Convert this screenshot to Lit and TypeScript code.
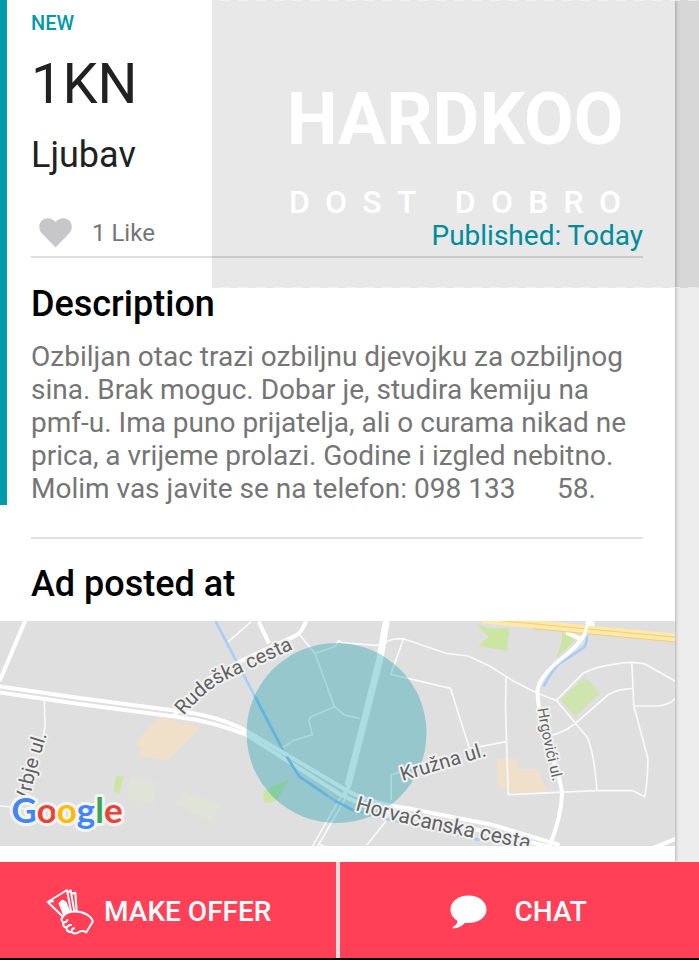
import { LitElement, html, css } from "lit";
import { customElement } from "lit/decorators.js";

@customElement("brand-mark")
class BrandMark extends LitElement {
  static styles = css`
    :host {
      display: flex;
      flex-direction: column;
      align-items: center;
      box-sizing: border-box;
      padding-top: 64px;
      padding-right: 1px;
      background:
        repeating-linear-gradient(90deg, transparent 0 8px, rgba(255, 255, 255, 0.5) 8px 18px) top / 100% 1px no-repeat,
        repeating-linear-gradient(90deg, transparent 0 8px, rgba(255, 255, 255, 0.5) 8px 18px) bottom / 100% 1px no-repeat,
        rgba(0, 0, 0, 0.09);
      color: #fff;
      pointer-events: none;
    }
    .lettering {
      text-align: center;
      font: 700 72px/112px Roboto, sans-serif;
      white-space: nowrap;
    }
    .tagline {
      width: 332px;
      display: flex;
      justify-content: space-between;
      font: 500 32px/52px Roboto, sans-serif;
    }
  `;
  render() {
    return html`
      <div class="lettering">HARDKOO</div>
      <div class="tagline">
        ${[..."DOST\u00a0DOBRO"].map((c) => html`<span>${c}</span>`)}
      </div>
    `;
  }
}

@customElement("area-map")
class AreaMap extends LitElement {
  static styles = css`
    :host {
      display: block;
    }
    svg {
      display: block;
      width: 100%;
      height: 225px;
      background: #dfdfdf;
    }
    .minor {
      fill: none;
      stroke: #fafafa;
      stroke-width: 5;
      stroke-linejoin: round;
    }
    .road {
      fill: none;
      stroke: #fff;
      stroke-width: 12;
      stroke-linejoin: round;
    }
    .main {
      fill: none;
      stroke: #fff;
      stroke-width: 12;
    }
    .water {
      fill: none;
      stroke: #a9cdfb;
      stroke-width: 8;
    }
    .deep {
      stroke: #62b3e0;
    }
    .park {
      fill: #cbe6a3;
    }
    .pitch {
      fill: #e0e3d7;
    }
    .site {
      fill: #f0e0c9;
    }
    .area {
      fill: #0098a8;
      fill-opacity: 0.33;
    }
    .label {
      font-family: Roboto, sans-serif;
      font-size: 20px;
      fill: #616161;
      stroke: #f1f1f1;
      stroke-width: 4px;
      stroke-linejoin: round;
      paint-order: stroke;
    }
    .large {
      font-size: 21px;
    }
    .small {
      font-size: 15px;
    }
    .logo {
      font-family: Lato, sans-serif;
      font-weight: 700;
      font-size: 35px;
      stroke: #f4f4f4;
      stroke-width: 6px;
      stroke-linejoin: round;
      paint-order: stroke;
    }
    .blue {
      fill: #4285f4;
    }
    .red {
      fill: #ea4335;
    }
    .yellow {
      fill: #fbbc05;
    }
    .green {
      fill: #34a853;
    }
  `;
  render() {
    return html`
      <svg viewBox="0 0 676 225" preserveAspectRatio="xMidYMid slice" role="img" aria-label="Map of the ad location">
        <defs>
          <path id="rudeska" d="M184 95 Q207 68 228 58 L320 16" />
          <path id="vrbje" d="M30 183 Q32 160 48 112" />
          <path id="kruzna" d="M403 160 L500 131" />
          <path id="horvacanska" d="M355 189 Q400 202 440 210 T570 237" />
          <path id="hrgovici" d="M538 88 Q544 125 557 175" />
        </defs>
        <g transform="translate(0 -11) scale(0.33333)">
          <path class="site" d="M480 318 L522 330 L548 346 L560 334 L600 358 L503 451 L412 434 L428 417 L408 398Z M1493 447 H1552 V477 H1611 L1645 545 L1530 548 V535 H1496Z" />
          <path class="park" d="M350 496 L372 501 L360 549 L342 545Z M870 505 L835 568 Q815 583 793 575 L792 543Z M1433 43 L1472 56 L1530 55 L1522 122 L1435 108 L1467 81Z M1688 68 L1720 72 L1722 95 L1668 145 Q1688 110 1688 68Z" />
          <path class="park" d="M1756 202 L1801 248 L1727 319 L1683 269Z" opacity=".8" />
          <path class="pitch" d="M390 502 L474 518 L463 582 L384 566Z M545 541 L660 586 L640 634 L528 585Z" />
          <path class="minor" d="M134 270 L137 345 L128 400 M0 587 L80 597 M683 98 L755 35 M900 74 L946 130 L1005 290 L932 322 L928 332 L939 374 L885 390 L850 412 M946 130 L1005 110 L1018 92 L1028 98 L1130 106 L1180 88 L1212 86 L1340 130 L1406 138 L1470 168 L1540 212 L1614 250 L1672 272 L1735 348 L1763 382 Q1785 430 1792 542 M1005 290 L1035 315 L1080 325 M1212 86 L1174 193 L1353 235 L1410 416 L1520 395 M1520 200 L1518 290 L1526 554 L1790 542 L1900 542 L1935 560 Q1945 520 1945 445 L1903 288 L1897 157 M1672 270 L1750 190 Q1800 163 1897 157 L1935 161 L2028 214 M1903 288 H1975 Q2010 285 2028 265 M1650 378 Q1705 365 1745 325 L1825 255 Q1860 235 1897 236 M1175 570 V495 L1300 450 M1165 600 L1158 635 L1102 705 M955 700 L975 710" />
          <path class="water" d="M648 33 Q690 115 730 190 L850 420 L900 500 L1000 568 L1060 600 L1180 632 M1175 630 L1440 690" />
          <path class="water" d="M1762 72 Q1765 110 1745 118 L1680 160 Q1660 178 1632 230" />
          <path class="road" d="M78 30 L0 214 M778 35 L808 100" />
          <path class="road" d="M920 33 Q905 70 890 76 L720 155 L620 210 L525 315" />
          <path class="main" d="M0 229 L240 264 L530 302 Q650 315 740 362 L1040 540 Q1110 580 1220 594 L1480 645 L1680 705" />
          <path class="main" d="M0 247 L240 282 L530 320 Q640 334 740 374 L1020 552 Q1110 600 1220 615 L1450 663 L1650 710" />
          <path class="main" d="M1165 33 L1145 150 L1050 525 L1030 560 M1156 33 L1136 150 L1041 525" />
          <path class="minor" d="M1030 550 L938 710 M1044 555 L954 710" />
          <path class="road" d="M1780 33 Q1745 100 1700 135 Q1615 200 1614 245 Q1615 300 1645 410 Q1680 490 1688 550 Q1685 620 1650 710 M1700 68 L1740 85" />
          <path class="road" d="M1960 714 L2030 686" />
          <path d="M1450 28 L2030 84" stroke="#ffe9a8" stroke-width="24" />
          <path d="M1450 27 L2030 82 M1600 56 L2030 96" stroke="#f1cf71" stroke-width="3" />
          <path d="M1752 80 L1768 33 M1758 37 L1785 46" stroke="#fff" stroke-width="9" />
        </g>
        <circle class="area" cx="337" cy="112" r="90" />
        <g transform="translate(0 -11) scale(0.33333)">
          <path class="water deep" d="M768 262 L844 408 M862 440 L900 500 L985 558 M1005 572 L1060 600" />
        </g>
        <text class="label"><textPath href="#rudeska">Rudeška cesta</textPath></text>
        <text class="label"><textPath href="#vrbje">Vrbje ul.</textPath></text>
        <text class="label"><textPath href="#kruzna">Kružna ul.</textPath></text>
        <text class="label large"><textPath href="#horvacanska">Horvaćanska cesta</textPath></text>
        <text class="label small"><textPath href="#hrgovici">Hrgovići ul.</textPath></text>
        <text class="logo" x="12" y="202"><tspan class="blue">G</tspan><tspan class="red">o</tspan><tspan class="yellow">o</tspan><tspan class="blue">g</tspan><tspan class="green">l</tspan><tspan class="red">e</tspan></text>
      </svg>
    `;
  }
}

@customElement("app-root")
class AppRoot extends LitElement {
  static styles = css`
    :host {
      display: flex;
      flex-direction: column;
      position: relative;
      box-sizing: border-box;
      min-height: 100vh;
      background: #ededed;
      border-bottom: 2px solid #000;
      font-family: Roboto, sans-serif;
      overflow: hidden;
    }
    brand-mark {
      position: absolute;
      top: 0;
      right: 0;
      width: 487px;
      height: 288px;
    }
    .card {
      flex: 1;
      margin-right: 24px;
      padding-bottom: 16px;
      background: #fff;
      box-shadow: 0 0 4px rgba(0, 0, 0, 0.4);
    }
    .listing {
      border-left: 7px solid #009aab;
      padding: 11px 32px 0 24px;
    }
    .status {
      margin: 0;
      font-size: 20px;
      line-height: 24px;
      font-weight: 500;
      color: #009aab;
    }
    .price {
      margin: 17px 0;
      font-size: 56px;
      line-height: 64px;
      color: #212121;
    }
    .title {
      margin: 0;
      font-size: 36px;
      line-height: 44px;
      font-weight: 400;
      color: #212121;
    }
    .meta {
      display: flex;
      justify-content: space-between;
      align-items: flex-start;
      height: 38px;
      margin-top: 41px;
      border-bottom: 2px solid #dedede;
    }
    .like {
      display: flex;
      gap: 20px;
      padding: 0 0 0 8px;
      border: 0;
      background: none;
      font: 24px/30px Roboto, sans-serif;
      color: #757575;
    }
    .heart {
      width: 33px;
      height: 30px;
      fill: #c7c7c9;
    }
    .published {
      font-size: 28px;
      line-height: 36px;
      color: #009aab;
    }
    .heading {
      margin: 0;
      font-size: 36px;
      line-height: 44px;
      font-weight: 500;
      color: #000;
    }
    .listing .heading {
      margin-top: 24px;
    }
    .body {
      margin: 14px 0 0;
      font-size: 28px;
      line-height: 33px;
      color: #757575;
    }
    .place {
      margin: 32px 32px 0 31px;
      padding: 23px 0 15px;
      border-top: 2px solid #e0e0e0;
    }
    .actions {
      display: grid;
      grid-template-columns: 48% 1fr;
      gap: 4px;
      background: #dedede;
      position: relative;
    }
    .action {
      display: flex;
      align-items: center;
      justify-content: center;
      gap: 28px;
      box-sizing: border-box;
      height: 96px;
      border: 0;
      padding: 4px 2px 0 0;
      background: #ff4057;
      color: #fff;
      font: 500 28px/36px Roboto, sans-serif;
    }
    .offer {
      gap: 10px;
      padding-right: 18px;
    }
    .cash {
      width: 48px;
      height: 48px;
      fill: none;
      stroke: #fff;
      stroke-width: 6;
      stroke-linejoin: round;
      stroke-linecap: round;
    }
    .bubble {
      width: 37px;
      height: 34px;
      fill: #fff;
    }
  `;
  render() {
    return html`
      <main class="card">
        <section class="listing">
          <p class="status">NEW</p>
          <div class="price">1KN</div>
          <h1 class="title">Ljubav</h1>
          <div class="meta">
            <button class="like">
              <svg class="heart" viewBox="0 0 33 30" aria-hidden="true">
                <path d="M16.500 29.500 L3 15.500 C-1 11 -.5 5 3.500 2 C7.500 -1 13 -.2 16.500 4 C20 -.2 25.500 -1 29.500 2 C33.500 5 34 11 30 15.500Z" />
              </svg>
              <span>1 Like</span>
            </button>
            <span class="published">Published: Today</span>
          </div>
          <h2 class="heading">Description</h2>
          <p class="body">
            Ozbiljan otac trazi ozbiljnu djevojku za ozbiljnog sina. Brak moguc.
            Dobar je, studira kemiju na pmf-u. Ima puno prijatelja, ali o curama
            nikad ne prica, a vrijeme prolazi. Godine i izgled nebitno. Molim vas
            javite se na telefon: 098 133&nbsp;&nbsp;&nbsp;&nbsp;&nbsp;&nbsp;58.
          </p>
        </section>
        <section>
          <div class="place"><h2 class="heading">Ad posted at</h2></div>
          <area-map></area-map>
        </section>
      </main>
      <brand-mark></brand-mark>
      <footer class="actions">
        <button class="action offer">
          <svg class="cash" viewBox="137 110 144 144" aria-hidden="true">
            <path d="M188 196 L142 152 L200 116 L212 180 M142 152 L158 150 M204 122 L211 117 L222 180 M213 127 L225 124 L229 180" />
            <path d="M190 188 L178 156 L186 148 L196 154 L206 180Z" fill="#fff" />
            <path d="M187 197 C200 178 235 175 260 190 Q276 200 277 211 L258 243 Q248 237 240 240 Q226 251 215 243 Q200 243 198 230 Q186 226 189 213 Q179 207 187 197 M189 213 Q199 214 201 206 M198 230 Q204 219 212 221 M215 243 Q212 232 221 231" />
          </svg>
          <span>MAKE OFFER</span>
        </button>
        <button class="action">
          <svg class="bubble" viewBox="0 0 37 34" aria-hidden="true">
            <path d="M18.500 0.500 C28.500 .5 36.500 6.500 36.500 14.500 C36.500 22.500 28.500 28 18.500 28 L15 27.800 C12 31 8 33.500 3 33.500 Q2 33 3 32 C6 30 8 28 7 25.500 C3 23 .5 19 .5 14.500 C.5 6.500 8.500 .5 18.500 .5Z" />
          </svg>
          <span>CHAT</span>
        </button>
      </footer>
    `;
  }
}
